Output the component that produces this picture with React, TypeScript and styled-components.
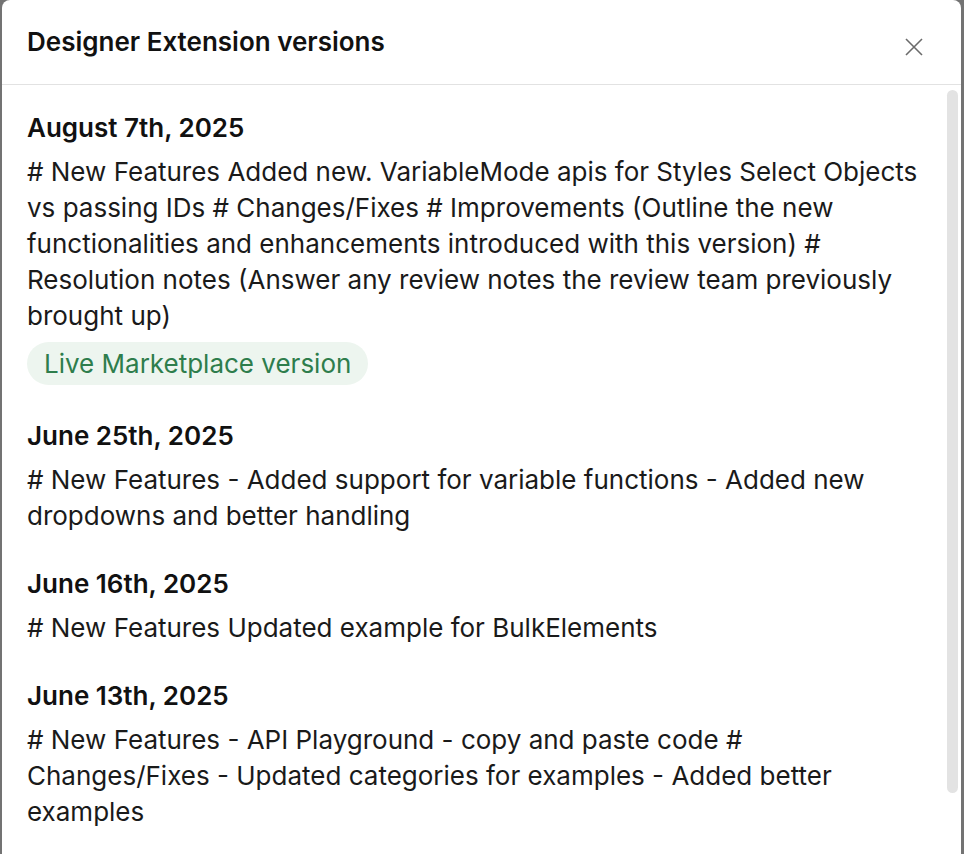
import React from "react";
import styled, { createGlobalStyle } from "styled-components";

const Global = createGlobalStyle`
  html, body { margin: 0; padding: 0; height: 100%; }
  body {
    background: #737373;
    font-family: Inter, "Noto Sans", sans-serif;
    overflow: hidden;
  }
  #root { height: 100%; }
`;

const Backdrop = styled.div`
  height: 100vh;
  display: flex;
  padding-left: 2px;
  padding-right: 3px;
  box-sizing: border-box;
`;

const Dialog = styled.div`
  position: relative;
  flex: 1;
  background: #fff;
  border-radius: 8px 8px 0 0;
  display: flex;
  flex-direction: column;
  min-height: 0;
`;

const Header = styled.header`
  height: 85px;
  flex: none;
  display: flex;
  align-items: center;
  justify-content: space-between;
  padding: 0 35px 0 25px;
  border-bottom: 1px solid #e2e2e2;
  box-sizing: border-box;
`;

const Title = styled.h2`
  margin: 0;
  font-size: 26px;
  line-height: 36px;
  font-weight: 600;
  color: #111;
`;

const CloseButton = styled.button`
  background: none;
  border: 0;
  padding: 0;
  margin-top: 10px;
  width: 24px;
  height: 24px;
  display: flex;
  align-items: center;
  justify-content: center;
  color: #6b6b6b;
  cursor: pointer;
`;

const Body = styled.div`
  flex: 1;
  min-height: 0;
  overflow: hidden;
  padding: 25px 30px 86px 25px;
  box-sizing: border-box;
`;

const ScrollThumb = styled.div`
  position: absolute;
  right: 3px;
  top: 90px;
  width: 11px;
  height: 703px;
  border-radius: 6px;
  background: #e3e3e3;
`;

const Section = styled.section`
  & + & { margin-top: 32px; }
`;

const DateHeading = styled.h3`
  margin: 0 0 8px;
  font-size: 26px;
  line-height: 36px;
  font-weight: 600;
  color: #111;
`;

const Notes = styled.p`
  margin: 0;
  font-size: 26px;
  line-height: 36px;
  font-weight: 400;
  color: #1a1a1a;
`;

const Badge = styled.span`
  display: inline-flex;
  align-items: center;
  height: 43px;
  margin-top: 8px;
  margin-bottom: 1px;
  padding: 0 17px;
  border-radius: 22px;
  background: #edf5ef;
  color: #2e7d4c;
  font-size: 26px;
  box-sizing: border-box;
`;

const versions = [
  {
    date: "August 7th, 2025",
    notes:
      "# New Features Added new. VariableMode apis for Styles Select Objects vs passing IDs # Changes/Fixes # Improvements (Outline the new functionalities and enhancements introduced with this version) # Resolution notes (Answer any review notes the review team previously brought up)",
    live: true,
  },
  {
    date: "June 25th, 2025",
    notes:
      "# New Features - Added support for variable functions - Added new dropdowns and better handling",
  },
  {
    date: "June 16th, 2025",
    notes: "# New Features Updated example for BulkElements",
  },
  {
    date: "June 13th, 2025",
    notes:
      "# New Features - API Playground - copy and paste code # Changes/Fixes - Updated categories for examples - Added better examples",
  },
];

export default function App() {
  return (
    <>
      <Global />
      <Backdrop>
        <Dialog>
          <Header>
            <Title>Designer Extension versions</Title>
            <CloseButton aria-label="Close">
              <svg width="18" height="18" viewBox="0 0 18 18" fill="none">
                <path d="M1 1L17 17M17 1L1 17" stroke="currentColor" strokeWidth="1.6" />
              </svg>
            </CloseButton>
          </Header>
          <Body>
            {versions.map((v) => (
              <Section key={v.date}>
                <DateHeading>{v.date}</DateHeading>
                <Notes>{v.notes}</Notes>
                {v.live && <Badge>Live Marketplace version</Badge>}
              </Section>
            ))}
          </Body>
          <ScrollThumb />
        </Dialog>
      </Backdrop>
    </>
  );
}
